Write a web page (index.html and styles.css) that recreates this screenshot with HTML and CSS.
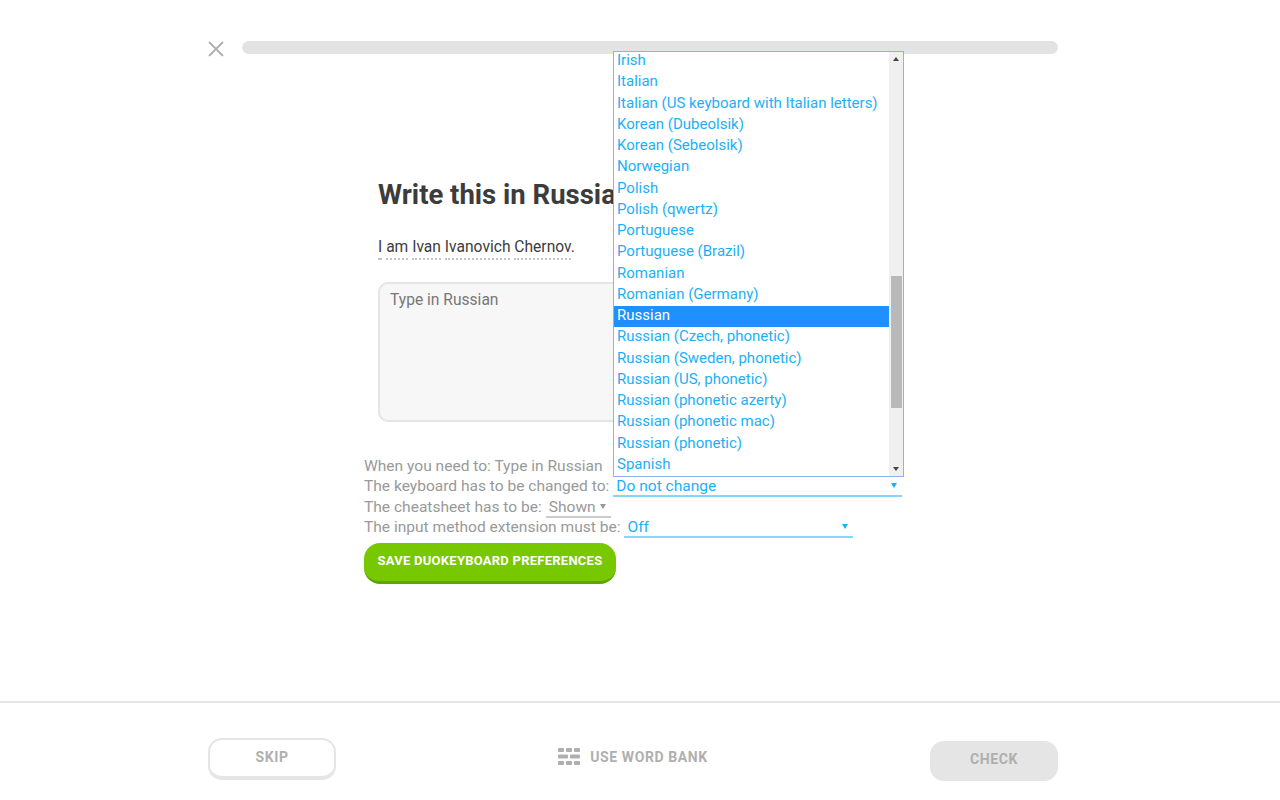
FILE: index.html
```html
<!DOCTYPE html>
<html lang="en">
<head>
    <meta charset="UTF-8">
    <meta name="viewport" content="width=device-width, initial-scale=1.0">
    <title>Write this in Russian</title>
    <link rel="stylesheet" href="styles.css">
</head>
<body>
    <main class="lesson">
        <div class="top-bar">
            <svg class="close-icon" width="16" height="16" viewBox="0 0 16 16">
                <path d="M1 1L15 15M15 1L1 15" stroke="#afafaf" stroke-width="1.8" fill="none"/>
            </svg>
            <div class="progress"></div>
        </div>
        <div class="challenge">
            <h1>Write this in Russian</h1>
            <p class="sentence">
                <span class="word">I</span> <span class="word">am</span> <span class="word">Ivan</span>
                <span class="word">Ivanovich</span> <span class="word">Chernov</span>.
            </p>
            <div class="answer">Type in Russian</div>
        </div>
        <div class="prefs">
            <div class="pref-row">When you need to: Type in Russian</div>
            <div class="pref-row">
                The keyboard has to be changed to:
                <span class="select select-keyboard">Do not change<i class="arrow"></i></span>
            </div>
            <div class="pref-row">
                The cheatsheet has to be:
                <span class="select select-sheet">Shown<i class="arrow"></i></span>
            </div>
            <div class="pref-row">
                The input method extension must be:
                <span class="select select-ime">Off<i class="arrow"></i></span>
            </div>
            <button class="btn-save">SAVE DUOKEYBOARD PREFERENCES</button>
        </div>
        <div class="dropdown">
            <ul class="options">
                <li>Irish</li>
                <li>Italian</li>
                <li>Italian (US keyboard with Italian letters)</li>
                <li>Korean (Dubeolsik)</li>
                <li>Korean (Sebeolsik)</li>
                <li>Norwegian</li>
                <li>Polish</li>
                <li>Polish (qwertz)</li>
                <li>Portuguese</li>
                <li>Portuguese (Brazil)</li>
                <li>Romanian</li>
                <li>Romanian (Germany)</li>
                <li class="selected">Russian</li>
                <li>Russian (Czech, phonetic)</li>
                <li>Russian (Sweden, phonetic)</li>
                <li>Russian (US, phonetic)</li>
                <li>Russian (phonetic azerty)</li>
                <li>Russian (phonetic mac)</li>
                <li>Russian (phonetic)</li>
                <li>Spanish</li>
            </ul>
            <div class="scrollbar">
                <i class="scroll-up"></i>
                <div class="scroll-thumb"></div>
                <i class="scroll-down"></i>
            </div>
        </div>
    </main>
    <footer class="bottom-bar">
        <button class="btn-skip">SKIP</button>
        <div class="word-bank">
            <svg width="23" height="17" viewBox="0 0 23 17" fill="#afafaf">
                <rect x="0" y="0" width="6" height="4" rx="1"/>
                <rect x="8" y="0" width="6" height="4" rx="1"/>
                <rect x="16" y="0" width="6" height="4" rx="1"/>
                <rect x="0" y="6.5" width="10" height="4" rx="1"/>
                <rect x="12" y="6.5" width="10" height="4" rx="1"/>
                <rect x="0" y="13" width="6" height="4" rx="1"/>
                <rect x="8" y="13" width="6" height="4" rx="1"/>
                <rect x="16" y="13" width="6" height="4" rx="1"/>
            </svg>
            <span>USE WORD BANK</span>
        </div>
        <button class="btn-check">CHECK</button>
    </footer>
</body>
</html>
```

FILE: styles.css
```css
* {
    box-sizing: border-box;
}
body {
    font-family: Roboto, "Liberation Sans", sans-serif;
    margin: 0;
    padding: 0;
    background-color: #fff;
}
.lesson {
    position: relative;
    height: 701px;
    overflow: hidden;
}
.top-bar {
    display: flex;
    align-items: flex-start;
    gap: 18px;
    padding: 41px 222px 0 208px;
}
.close-icon {
    flex: none;
}
.progress {
    flex: 1;
    height: 13px;
    background-color: #e3e3e3;
    border-radius: 7px;
}
.challenge {
    width: 524px;
    margin: 0 0 0 378px;
    padding-top: 122px;
}
h1 {
    margin: 0;
    font-size: 27.5px;
    line-height: 32px;
    font-weight: 700;
    color: #3c3c3c;
    white-space: nowrap;
}
.sentence {
    margin: 26px 0 0;
    font-size: 15.6px;
    line-height: 20px;
    color: #3c3c3c;
}
.word {
    border-bottom: 2px dotted #c4c4c4;
    padding-bottom: 2px;
}
.answer {
    height: 140px;
    margin-top: 25px;
    padding: 6px 10px;
    font-size: 15.6px;
    line-height: 20px;
    color: #777;
    background-color: #f7f7f7;
    border: 2px solid #e5e5e5;
    border-radius: 10px;
}
.prefs {
    margin: 34px 0 0 364px;
    font-size: 15.55px;
    color: #999;
}
.pref-row {
    display: flex;
    align-items: flex-start;
    gap: 4px;
    height: 20.4px;
    line-height: 20px;
    white-space: nowrap;
}
.select {
    position: relative;
    display: inline-block;
    flex: none;
    height: 21px;
    padding-left: 3px;
    color: #1cb0f6;
    border-bottom: 2px solid #84d8ff;
}
.select .arrow {
    position: absolute;
    top: 7px;
    right: 5px;
    border-left: 3px solid transparent;
    border-right: 3px solid transparent;
    border-top: 5px solid currentColor;
}
.select-keyboard {
    width: 289px;
}
.select-sheet {
    width: 65px;
    color: #999;
    border-bottom-color: #ccc;
}
.select-ime {
    width: 229px;
}
.btn-save {
    display: block;
    width: 252px;
    height: 41px;
    margin-top: 5px;
    padding: 0 0 2px;
    font-family: inherit;
    font-size: 13px;
    font-weight: 700;
    letter-spacing: 0.25px;
    color: #fff;
    background-color: #78c800;
    border: 0;
    border-bottom: 3px solid #5ea400;
    border-radius: 16px;
}
.dropdown {
    position: absolute;
    left: 613px;
    top: 51px;
    width: 291px;
    height: 426px;
    display: flex;
    background-color: #fff;
    border: 1px solid #8fb0ea;
}
.options {
    flex: 1;
    min-width: 0;
    margin: -1px 0 0;
    padding: 0;
    list-style: none;
    font-size: 15px;
    color: #1cb0f6;
}
.options li {
    height: 21.25px;
    line-height: 19px;
    padding-left: 3px;
    white-space: nowrap;
}
.options .selected {
    color: #fff;
    background-color: #1e90ff;
}
.scrollbar {
    position: relative;
    flex: none;
    width: 14px;
    background-color: #f0f0f0;
}
.scroll-up,
.scroll-down {
    position: absolute;
    left: 4px;
    border-left: 3px solid transparent;
    border-right: 3px solid transparent;
}
.scroll-up {
    top: 5px;
    border-bottom: 4px solid #444;
}
.scroll-down {
    bottom: 5px;
    border-top: 4px solid #444;
}
.scroll-thumb {
    position: absolute;
    left: 2px;
    top: 224px;
    width: 11px;
    height: 132px;
    background-color: #b9b9b9;
}
.bottom-bar {
    display: flex;
    align-items: center;
    justify-content: space-between;
    height: 99px;
    padding: 14px 222px 0 208px;
    border-top: 2px solid #e5e5e5;
}
.bottom-bar button {
    font-family: inherit;
    font-size: 14px;
    font-weight: 700;
    letter-spacing: 0.6px;
    color: #afafaf;
    padding: 0 0 4px;
}
.bottom-bar .btn-skip {
    width: 128px;
    height: 42px;
    padding-bottom: 2px;
    background-color: #fff;
    border: 2px solid #e5e5e5;
    border-bottom-width: 4px;
    border-radius: 14px;
}
.word-bank {
    display: flex;
    align-items: center;
    gap: 9px;
    margin-bottom: 4px;
    font-size: 14px;
    font-weight: 700;
    letter-spacing: 0.6px;
    color: #afafaf;
}
.btn-check {
    width: 128px;
    height: 40px;
    margin-top: 4px;
    background-color: #e5e5e5;
    border: 0;
    border-radius: 14px;
}
```
